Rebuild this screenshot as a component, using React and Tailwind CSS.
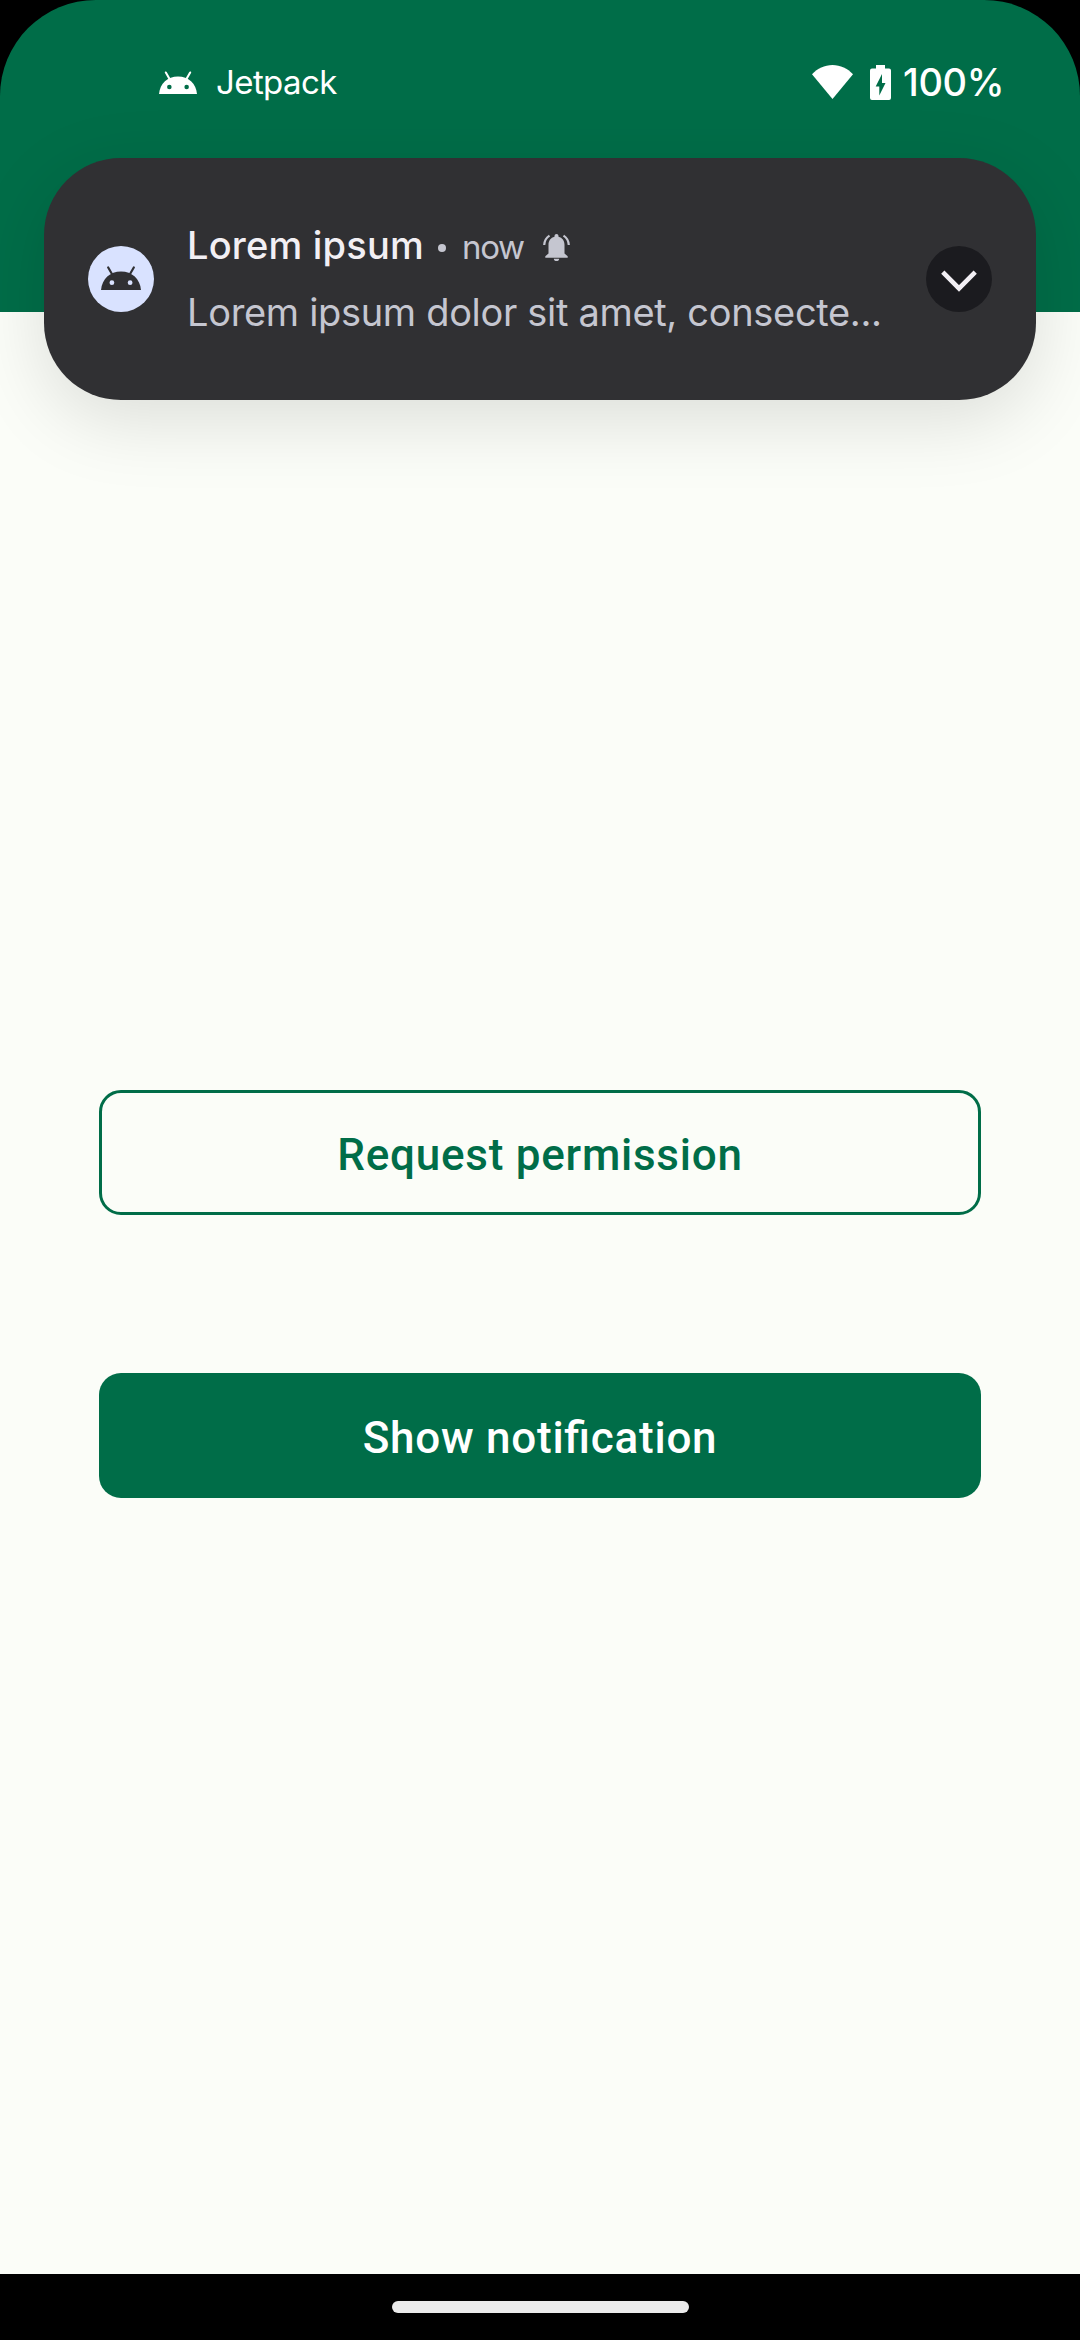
import React from "react";

function AndroidHead({ className, eye }) {
  return (
    <svg viewBox="0 0 40 24" className={className} fill="currentColor">
      <path d="M0 24C1 13 9 5.6 20 5.6S39 13 40 24Z" />
      <path d="M7.2 1.5 11.4 8.8M32.8 1.5 28.6 8.8" stroke="currentColor" strokeWidth="2.2" strokeLinecap="round" />
      <circle cx="10.9" cy="16.7" r="2.4" fill={eye} />
      <circle cx="29.1" cy="16.7" r="2.4" fill={eye} />
    </svg>
  );
}

function StatusBar() {
  return (
    <div className="flex h-[158px] items-center pt-[6px] pl-[159px] pr-[76px] text-white">
      <AndroidHead className="h-[23px] w-[38px]" eye="#006d48" />
      <span className="ml-[19px] text-[33px] leading-none tracking-[-0.6px]">Jetpack</span>
      <svg viewBox="0 0 41 34" className="ml-auto h-[34px] w-[41px]" fill="currentColor">
        <path d="M0 9.2C5.500 3.500 12.500 0 20.500 0S35.500 3.500 41 9.200L20.500 34Z" />
      </svg>
      <svg viewBox="0 0 21 35" className="ml-[17px] h-[35px] w-[21px]" fill="currentColor">
        <path
          fillRule="evenodd"
          d="M6 0H15V3.500H19Q21 3.500 21 5.500V33Q21 35 19 35H2Q0 35 0 33V5.500Q0 3.500 2 3.500H6ZM12 9 5.700 21.500H9.300V30.500L15.500 18H12Z"
        />
      </svg>
      <span className="ml-[12px] text-[38px] font-medium leading-none tracking-[-0.4px]">100%</span>
    </div>
  );
}

function Bell() {
  return (
    <svg viewBox="0 0 27 27" className="ml-[19px] mt-[4px] h-[27px] w-[27px] self-center text-[#c5c6d0]" fill="currentColor">
      <path d="M13.500 0C14.700 0 15.500 .8 15.500 2V2.800C19.300 3.700 21.500 6.900 21.500 10.700V19.500L24.700 22.300V23.700H2.300V22.300L5.500 19.500V10.700C5.500 6.900 7.700 3.700 11.500 2.800V2C11.500 .8 12.300 0 13.500 0Z" />
      <path d="M10.800 24.700H16.200C16.200 26.200 15 27 13.500 27S10.800 26.200 10.800 24.700Z" />
      <path d="M6.500 1.600C3.200 3.700 1.400 7 1.200 11M20.500 1.600C23.800 3.700 25.600 7 25.800 11" fill="none" stroke="currentColor" strokeWidth="2.2" />
    </svg>
  );
}

function Notification() {
  return (
    <div className="mx-[44px] flex h-[242px] items-center rounded-[77px] bg-[#303033] px-[44px] shadow-[0_20px_75px_rgba(0,0,0,0.125)]">
      <div className="flex size-[66px] shrink-0 items-center justify-center rounded-full bg-[#d9e2ff] text-[#303033]">
        <AndroidHead className="-mt-[2px] h-[24px] w-[40px]" eye="#d9e2ff" />
      </div>
      <div className="ml-[33px] min-w-0 flex-1">
        <div className="flex h-[67px] items-baseline whitespace-nowrap leading-[67px]">
          <span className="text-[38px] font-medium tracking-[0.2px] text-[#f2eff4]">Lorem ipsum</span>
          <span className="ml-[14px] size-[8px] -translate-y-[7px] rounded-full bg-[#c5c6d0]" />
          <span className="ml-[16px] text-[33px] tracking-[-1.3px] text-[#c5c6d0]">now</span>
          <Bell />
        </div>
        <div className="h-[67px] whitespace-nowrap text-[38px] leading-[67px] tracking-[-0.32px] text-[#c5c6d0]">
          Lorem ipsum dolor sit amet, consecte...
        </div>
      </div>
      <div className="flex size-[66px] shrink-0 items-center justify-center rounded-full bg-[#1b1b1f]">
        <svg viewBox="0 0 66 66" className="size-[66px]" fill="none" stroke="#f2eff4" strokeWidth="4.6">
          <path d="M16.800 26.200 33 42.400 49.200 26.200" />
        </svg>
      </div>
    </div>
  );
}

export default function App() {
  return (
    <div className="flex h-[2340px] w-[1080px] flex-col overflow-hidden bg-black font-[Inter,Roboto,sans-serif]">
      <div className="flex flex-1 flex-col rounded-t-[96px] bg-[linear-gradient(#006d48_312px,#fbfdf8_312px)]">
        <StatusBar />
        <Notification />
        <div className="mt-[690px] flex flex-col gap-[158px] px-[99px] font-[Roboto,sans-serif] text-[44px] font-medium tracking-[0.75px]">
          <button className="h-[125px] rounded-[22px] border-3 border-[#006d48] pt-[5px] text-[#006d48]">Request permission</button>
          <button className="h-[125px] rounded-[22px] bg-[#006d48] pt-[5px] text-white [font-feature-settings:'liga']">Show notification</button>
        </div>
      </div>
      <div className="flex h-[66px] items-center justify-center">
        <div className="h-[12px] w-[297px] rounded-full bg-[#ebebeb]" />
      </div>
    </div>
  );
}
